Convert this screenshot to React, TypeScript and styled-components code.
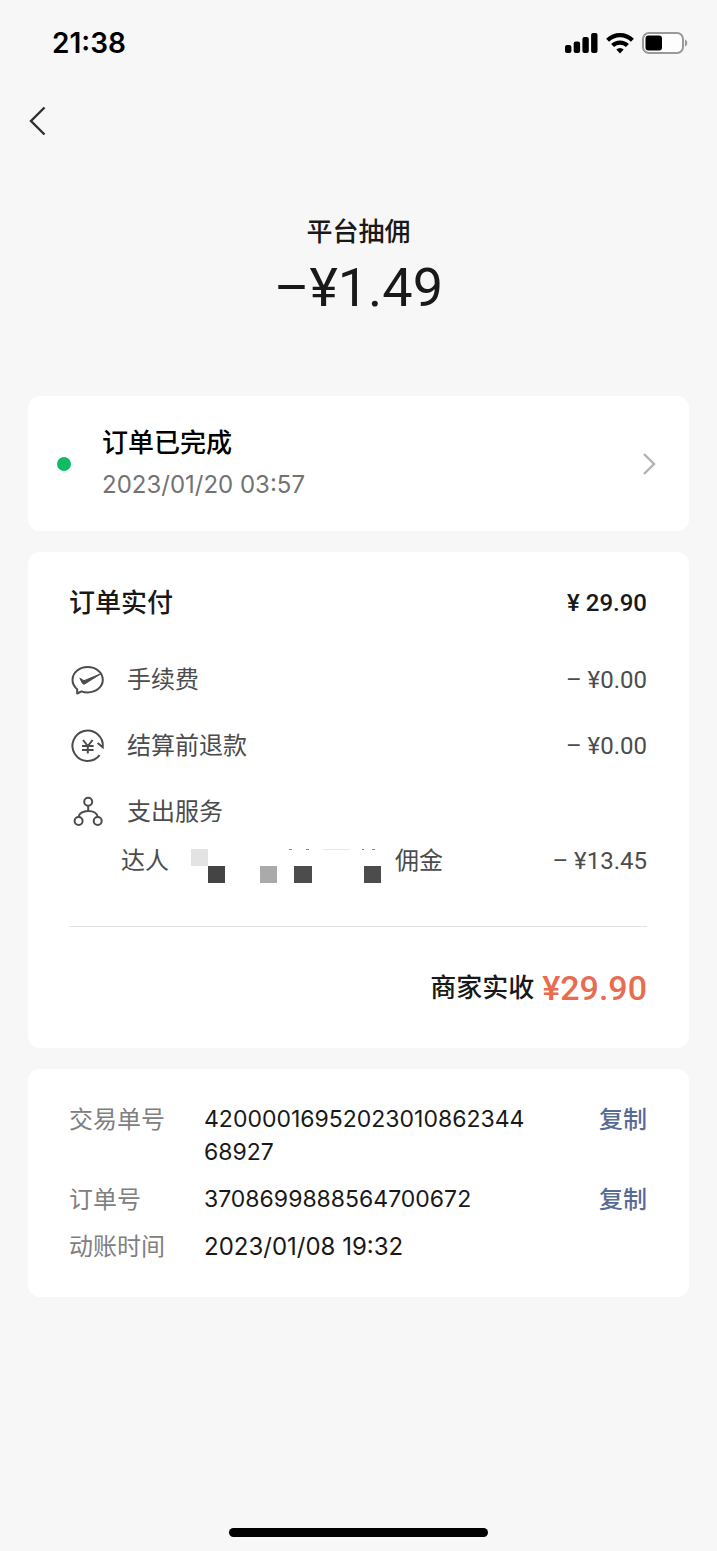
import React from "react";
import styled, { createGlobalStyle } from "styled-components";

const GlobalStyle = createGlobalStyle`
  *, *::before, *::after { box-sizing: border-box; }
  body { margin: 0; background: #f7f7f7; }
  button { font: inherit; color: inherit; border: 0; padding: 0; background: none; cursor: pointer; text-align: left; }
  svg { display: block; flex: none; }
  h1, h2, p, ul, dl, dd, dt { margin: 0; padding: 0; font-weight: inherit; }
  ul { list-style: none; }
`;

const textFont = `Inter, "Noto Sans CJK SC", sans-serif`;
const moneyFont = `Roboto, "Noto Sans CJK SC", sans-serif`;

const Page = styled.div`
  min-height: 100vh;
  display: flex;
  flex-direction: column;
  font-family: ${textFont};
  font-size: 24px;
  line-height: 32px;
  color: #191919;
`;

const StatusBar = styled.div`
  height: 86px;
  padding: 0 29px 0 52px;
  display: flex;
  align-items: center;
  justify-content: space-between;
  color: #000;
`;

const Clock = styled.time`
  font-size: 28px;
  font-weight: 600;
`;

const StatusIcons = styled.div`
  display: flex;
  align-items: center;
  gap: 8px;
`;

const NavBar = styled.nav`
  height: 70px;
  padding: 0 27px;
  display: flex;
  align-items: center;
`;

const Summary = styled.header`
  padding: 58px 28px 74px;
  text-align: center;
`;

const SummaryTitle = styled.h1`
  font-size: 26px;
  font-weight: 500;
  line-height: 36px;
`;

const SummaryAmount = styled.p`
  margin-top: 4px;
  font-family: ${moneyFont};
  font-size: 54px;
  line-height: 68px;
`;

const Main = styled.main`
  padding: 0 28px;
  display: flex;
  flex-direction: column;
  gap: 21px;
`;

const Card = styled.section`
  background: #fff;
  border-radius: 12px;
`;

const StatusButton = styled.button`
  width: 100%;
  padding: 28px 33px 27px 29px;
  display: flex;
  align-items: center;
`;

const Dot = styled.span`
  width: 14px;
  height: 14px;
  margin-right: 31px;
  border-radius: 50%;
  background: #10bc62;
`;

const StatusText = styled.span`
  flex: 1;
  display: flex;
  flex-direction: column;
  gap: 4px;
  line-height: 38px;
`;

const StatusTitle = styled.span`
  font-size: 26px;
  font-weight: 500;
  color: #000;
`;

const StatusDate = styled.span`
  color: #737373;
`;

const FeeCard = styled(Card)`
  padding: 31px 42px 40px 41px;
`;

const FeeHeader = styled.div`
  display: flex;
  align-items: center;
  justify-content: space-between;
  margin-bottom: 24px;
  line-height: 40px;
  font-weight: 500;
`;

const FeeTitle = styled.h2`
  font-size: 26px;
`;

const Money = styled.span`
  font-family: ${moneyFont};
  white-space: nowrap;
`;

const FeeRow = styled.li`
  height: 66px;
  display: flex;
  align-items: center;
  color: #4c4c4c;
`;

const FeeLabel = styled.span`
  flex: 1;
  margin-left: 20px;
`;

const SubRow = styled.li`
  display: flex;
  align-items: flex-start;
  padding: 0 0 43px 52px;
  color: #4c4c4c;
`;

const Masked = styled.span`
  padding: 4px 14px 0 22px;
`;

const SubTail = styled.span`
  flex: 1;
`;

const Total = styled.div`
  display: flex;
  align-items: center;
  justify-content: flex-end;
  gap: 8px;
  padding-top: 41px;
  border-top: 1px solid #e3e3e3;
  font-size: 26px;
  font-weight: 500;
  line-height: 40px;
`;

const TotalMoney = styled(Money)`
  font-size: 34px;
  color: #e76c50;
`;

const InfoList = styled.dl`
  padding: 34px 42px 34px 41px;
  display: flex;
  flex-direction: column;
  gap: 14px;
  line-height: 33px;
`;

const InfoRow = styled.div`
  display: flex;
  align-items: flex-start;
`;

const InfoLabel = styled.dt`
  width: 135px;
  flex: none;
  color: #808080;
`;

const InfoValue = styled.dd<{ $serial: boolean }>`
  flex: 1;
  min-width: 0;
  font-size: ${({ $serial }) => ($serial ? 23 : 24)}px;
  word-break: break-all;
`;

const CopyButton = styled.button`
  flex: none;
  margin-left: 68px;
  font-weight: 500;
  color: #576b95;
`;

const HomeIndicator = styled.div`
  width: 36%;
  height: 9px;
  margin: auto auto 14px;
  border-radius: 5px;
  background: #000;
`;

const SignalIcon = () => (
  <svg width="33" height="20" viewBox="0 0 33 20" fill="#000" aria-hidden="true">
    <rect x="0" y="12" width="6.4" height="8" rx="2" />
    <rect x="8.7" y="8.5" width="6.4" height="11.5" rx="2" />
    <rect x="17.4" y="4" width="6.4" height="16" rx="2" />
    <rect x="26.1" y="0" width="6.4" height="20" rx="2" />
  </svg>
);

const WifiIcon = () => (
  <svg width="28" height="21" viewBox="0 0 28 21" aria-hidden="true">
    <g fill="none" stroke="#000" strokeWidth="4.2">
      <path d="M1.6 7.3A17.6 17.6 0 0 1 26.4 7.3" />
      <path d="M6.6 12.6A10.5 10.5 0 0 1 21.4 12.6" />
    </g>
    <path d="M14 20.4 10.3 16.6A5.3 5.3 0 0 1 17.7 16.6Z" />
  </svg>
);

const BatteryIcon = () => (
  <svg width="46" height="22" viewBox="0 0 46 22" aria-hidden="true">
    <rect x="1" y="1" width="40" height="20" rx="6" fill="#fdfdfd" stroke="#999" strokeWidth="2" />
    <rect x="3.5" y="3.5" width="16.5" height="15" rx="3" />
    <path d="M43 7.5C46 8.5 46 13.5 43 14.5Z" fill="#999" />
  </svg>
);

const BackIcon = () => (
  <svg width="20" height="30" viewBox="0 0 20 30" fill="none" stroke="#303030" strokeWidth="2.4" aria-hidden="true">
    <path d="M17.5 1.5 4 15 17.5 28.5" />
  </svg>
);

const ChevronIcon = () => (
  <svg width="14" height="22" viewBox="0 0 14 22" fill="none" stroke="#b2b2b2" strokeWidth="2.4" aria-hidden="true">
    <path d="M2 1 12 11 2 21" />
  </svg>
);

const FeeIcon = () => (
  <svg width="38" height="36" viewBox="0 0 38 36" fill="none" stroke="#4c4c4c" strokeWidth="2" strokeLinejoin="round" aria-hidden="true">
    <path d="M8.2 27.2C5.2 24.8 3.5 21.5 3.5 17.8C3.5 10.5 10.3 5 18.7 5S33.8 10.5 33.8 17.8S27 30.4 18.7 30.4C16.5 30.4 14.4 30.1 12.5 29.3L8.2 31.5Z" />
    <path d="M10.8 16.2 15 18.7 32.2 11.6 16 21.8Q14.4 22.8 13.4 21.2Z" fill="#4c4c4c" strokeWidth="1" />
  </svg>
);

const RefundIcon = () => (
  <svg width="38" height="36" viewBox="0 0 38 36" fill="none" stroke="#4c4c4c" strokeWidth="2" aria-hidden="true">
    <path d="M30.6 27.2A15.2 15.2 0 1 1 33.8 19.2L28.6 15" />
    <path d="M14 12 18.8 18 23.6 12M18.8 18V25.5M13 18H24.6M13 22H24.6" />
  </svg>
);

const ServiceIcon = () => (
  <svg width="38" height="36" viewBox="0 0 38 36" fill="none" stroke="#4c4c4c" strokeWidth="2" aria-hidden="true">
    <circle cx="19.2" cy="7.8" r="4" />
    <circle cx="9.6" cy="27" r="4" />
    <circle cx="28.7" cy="27" r="4" />
    <path d="M19.2 12V17M9.6 23C10 19.5 13.9 17 19.2 17S28.3 19.5 28.7 23" />
  </svg>
);

/* Pixelated cover over the partner's name */
const Mosaic = () => (
  <svg width="190" height="34" viewBox="0 0 190 34" role="img" aria-label="已隐藏">
    <rect x="0" y="0" width="17" height="17" fill="#e3e3e3" />
    <rect x="17" y="17" width="17" height="17" fill="#444" />
    <rect x="69" y="17" width="17" height="17" fill="#aaa" />
    <rect x="103" y="17" width="18" height="17" fill="#4c4c4c" />
    <rect x="173" y="17" width="17" height="17" fill="#4c4c4c" />
    <g fill="#8a8a8a">
      <rect x="98" y="0" width="3" height="1" />
      <rect x="115" y="0" width="3" height="1" />
      <rect x="171" y="0" width="2" height="1" />
      <rect x="181" y="0" width="3" height="1" />
    </g>
    <rect x="132" y="0" width="27" height="1" fill="#e8e8e8" />
  </svg>
);

const fees = [
  { label: "手续费", amount: "– ¥0.00", Icon: FeeIcon },
  { label: "结算前退款", amount: "– ¥0.00", Icon: RefundIcon },
  { label: "支出服务", amount: "", Icon: ServiceIcon },
];

const details = [
  { label: "交易单号", value: "4200001695202301086234468927", copy: true },
  { label: "订单号", value: "3708699888564700672", copy: true },
  { label: "动账时间", value: "2023/01/08 19:32", copy: false },
];

export default function App() {
  return (
    <Page>
      <GlobalStyle />
      <StatusBar>
        <Clock>21:38</Clock>
        <StatusIcons>
          <SignalIcon />
          <WifiIcon />
          <BatteryIcon />
        </StatusIcons>
      </StatusBar>
      <NavBar>
        <button type="button" aria-label="返回">
          <BackIcon />
        </button>
      </NavBar>
      <Summary>
        <SummaryTitle>平台抽佣</SummaryTitle>
        <SummaryAmount>–¥1.49</SummaryAmount>
      </Summary>
      <Main>
        <Card>
          <StatusButton type="button">
            <Dot />
            <StatusText>
              <StatusTitle>订单已完成</StatusTitle>
              <StatusDate>2023/01/20 03:57</StatusDate>
            </StatusText>
            <ChevronIcon />
          </StatusButton>
        </Card>
        <FeeCard>
          <FeeHeader>
            <FeeTitle>订单实付</FeeTitle>
            <Money>¥ 29.90</Money>
          </FeeHeader>
          <ul>
            {fees.map(({ label, amount, Icon }) => (
              <FeeRow key={label}>
                <Icon />
                <FeeLabel>{label}</FeeLabel>
                {amount && <Money>{amount}</Money>}
              </FeeRow>
            ))}
            <SubRow>
              <span>达人</span>
              <Masked>
                <Mosaic />
              </Masked>
              <SubTail>佣金</SubTail>
              <Money>– ¥13.45</Money>
            </SubRow>
          </ul>
          <Total>
            <span>商家实收</span>
            <TotalMoney>¥29.90</TotalMoney>
          </Total>
        </FeeCard>
        <Card>
          <InfoList>
            {details.map(({ label, value, copy }) => (
              <InfoRow key={label}>
                <InfoLabel>{label}</InfoLabel>
                <InfoValue $serial={copy}>{value}</InfoValue>
                {copy && (
                  <CopyButton type="button" aria-label={`复制${label}`}>
                    复制
                  </CopyButton>
                )}
              </InfoRow>
            ))}
          </InfoList>
        </Card>
      </Main>
      <HomeIndicator />
    </Page>
  );
}
